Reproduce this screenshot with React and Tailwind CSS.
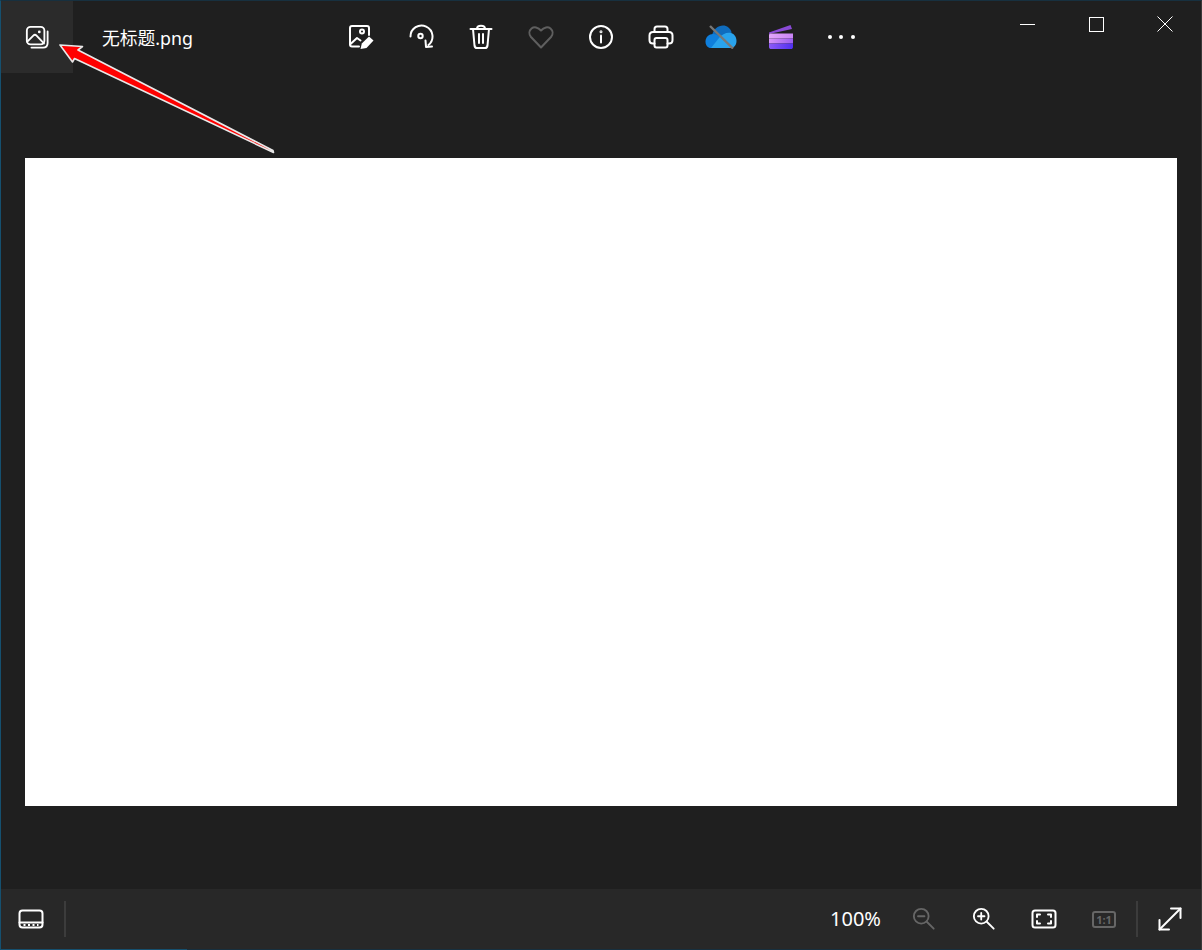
import React from 'react';

const stroke = { fill: 'none', stroke: 'currentColor', strokeWidth: 2, strokeLinecap: 'round', strokeLinejoin: 'round' };

const Icon = ({ children, size = 24, className = '' }) => (
  <svg width={size} height={size} viewBox="0 0 26 26" className={className} {...stroke}>
    {children}
  </svg>
);

const ToolButton = ({ children, dim }) => (
  <button className={`flex h-[72px] w-[60px] items-center justify-center ${dim ? 'text-[#5f5f5f]' : 'text-white'}`}>
    {children}
  </button>
);

const BottomButton = ({ children, dim }) => (
  <button className={`flex h-[60px] w-[60px] items-center justify-center ${dim ? 'text-[#666666]' : 'text-white'}`}>
    {children}
  </button>
);

const CloudOff = () => (
  <svg width="32" height="24" viewBox="0 0 32 24">
    <path d="M7 11 C8 4 13 0.500 18 0.500 C22 0.500 25 3 26.500 7 L26 15 L12 15 Z" fill="#0f6cbd" />
    <path d="M0.500 16.500 C0.500 11.500 4.500 8.500 9 9 C12 9.500 14 11 16 13 L19 19 L8 23 L5 23 C2.500 22.500 0.500 20 0.500 16.500 Z" fill="#0f7fdc" />
    <path d="M14 13 C17 9 22 7 26 8 C29.500 9 31.500 12 31.500 16 C31.500 20 29 23 26 23 L6 23 Z" fill="#29a3ec" />
    <path d="M5 1 L28 23.500" stroke="#777777" strokeWidth="2.400" />
  </svg>
);

const Clipchamp = () => (
  <svg width="26" height="26" viewBox="0 0 26 26">
    <defs>
      <linearGradient id="clip-top" x1="0" y1="0" x2="1" y2="0">
        <stop offset="0" stopColor="#e3a6fa" />
        <stop offset="1" stopColor="#c884f5" />
      </linearGradient>
      <linearGradient id="clip-mid" x1="0" y1="0" x2="1" y2="0">
        <stop offset="0" stopColor="#d795f8" />
        <stop offset="1" stopColor="#9a5cf0" />
      </linearGradient>
      <linearGradient id="clip-low" x1="0" y1="0" x2="1" y2="0">
        <stop offset="0" stopColor="#8d5af5" />
        <stop offset="1" stopColor="#5030f2" />
      </linearGradient>
    </defs>
    <path d="M1 8.500 L22.500 1 L24 5 L1 10 Z" fill="#8a4ad6" />
    <path d="M1 11 C1 10 2 9.500 3 9.500 H25 V14.500 H1 Z" fill="url(#clip-top)" />
    <rect x="1" y="14.500" width="24" height="5" fill="url(#clip-mid)" />
    <path d="M1 19.500 H25 V23 C25 24.500 24 25 23 25 H3 C2 25 1 24.500 1 23 Z" fill="url(#clip-low)" />
  </svg>
);

// red annotation arrow pasted over the screenshot
const Arrow = () => (
  <svg width="290" height="160" viewBox="0 0 290 160" className="absolute -left-px -top-px">
    <path
      d="M60 45 L82.500 46.500 L78 50 L273 150.500 L273.500 152.500 L74.500 58.500 L72.500 62 Z"
      fill="#ff0000"
      stroke="#e8e8e8"
      strokeWidth="1.600"
      strokeLinejoin="round"
    />
  </svg>
);

export default function App() {
  return (
    <div
      className="relative flex h-[950px] w-[1202px] flex-col overflow-hidden border-x border-t border-l-[#15506f] border-r-[#3a3a3a] border-t-[#17303f] bg-[#1f1f1f] text-white"
      style={{ fontFamily: '"Noto Sans", "Noto Sans CJK SC", sans-serif' }}
    >
      <header className="flex h-[72px] shrink-0 items-center">
        <div className="flex h-[72px] w-[72px] items-center justify-center bg-[#2b2b2b]">
          <Icon size={24}>
            <rect x="2" y="2" width="19" height="19" rx="4" />
            <path d="M2.500 18 L9 11.500 C10 10.500 11.500 10.500 12.500 11.500 L20.500 20" />
            <circle cx="15.500" cy="7.500" r="1.500" fill="currentColor" stroke="none" />
            <path d="M24.500 7 V19.500 C24.500 22.500 22.500 24.500 19.500 24.500 H7" />
          </Icon>
        </div>
        <div className="ml-[29px] w-[229px] pt-[3px] text-[17.800px] leading-none">无标题.png</div>

        <div className="flex items-center">
          <ToolButton>
            <Icon size={26}>
              <path d="M11 22.500 H4 C2.800 22.500 2 21.700 2 20.500 V4 C2 2.800 2.800 2 4 2 H19 C20.200 2 21 2.800 21 4 V11" />
              <path d="M2.500 20 L9 14 L12.500 16.500" />
              <circle cx="14" cy="7.500" r="2" />
              <path d="M12.500 25 L13.800 19.500 L21 12.500 L25.500 16.500 L18.500 24 Z" fill="currentColor" stroke="none" />
            </Icon>
          </ToolButton>
          <ToolButton>
            <Icon size={26}>
              <path d="M2.500 12.500 A11 11 0 1 1 20.500 21" />
              <path d="M17.500 16.500 L18 23 L24 22.500" />
              <circle cx="12.500" cy="12" r="2.200" />
            </Icon>
          </ToolButton>
          <ToolButton>
            <Icon size={26}>
              <path d="M2.500 5 H23.500" />
              <path d="M9 5 C9 2.500 10.500 1.800 13 1.800 C15.500 1.800 17 2.500 17 5" />
              <path d="M5 5 L6.500 21.500 C6.700 23 7.500 24 9 24 H17 C18.500 24 19.300 23 19.500 21.500 L21 5" />
              <path d="M11 10 V19 M15 10 V19" />
            </Icon>
          </ToolButton>
          <ToolButton dim>
            <Icon size={26}>
              <path d="M13 23.500 L3 13 C0.500 10 1.200 6.500 3.500 4.500 C6 2.500 10 3 13 6.500 C16 3 20 2.500 22.500 4.500 C24.800 6.500 25.500 10 23 13 Z" />
            </Icon>
          </ToolButton>
          <ToolButton>
            <Icon size={26}>
              <circle cx="13" cy="13" r="11" />
              <path d="M13 11.500 V18.500" />
              <circle cx="13" cy="7.800" r="0.500" fill="currentColor" />
            </Icon>
          </ToolButton>
          <ToolButton>
            <Icon size={26}>
              <path d="M6.500 8 V5 C6.500 3.500 7.500 2.500 9 2.500 H17 C18.500 2.500 19.500 3.500 19.500 5 V8" />
              <path d="M6.500 19.500 H5 C3 19.500 1.500 18 1.500 16 V11.500 C1.500 9.500 3 8 5 8 H21 C23 8 24.500 9.500 24.500 11.500 V16 C24.500 18 23 19.500 21 19.500 H19.500" />
              <rect x="6.500" y="14" width="13" height="9.500" rx="2" />
            </Icon>
          </ToolButton>
          <ToolButton>
            <CloudOff />
          </ToolButton>
          <ToolButton>
            <Clipchamp />
          </ToolButton>
          <ToolButton>
            <div className="flex items-center gap-[7.500px]">
              <span className="size-1 rounded-full bg-white" />
              <span className="size-1 rounded-full bg-white" />
              <span className="size-1 rounded-full bg-white" />
            </div>
          </ToolButton>
        </div>

        <div className="ml-auto flex -translate-y-[13px] items-center pr-[2px]">
          <div className="flex h-[46px] w-[69px] items-center justify-center">
            <span className="h-px w-[15px] bg-white" />
          </div>
          <div className="flex h-[46px] w-[69px] items-center justify-center">
            <span className="size-[15px] border border-white" />
          </div>
          <div className="flex h-[46px] w-[68px] items-center justify-center">
            <svg width="16" height="16" viewBox="0 0 16 16" stroke="white" strokeWidth="1">
              <path d="M0.500 0.500 L15.500 15.500 M15.500 0.500 L0.500 15.500" />
            </svg>
          </div>
        </div>
      </header>

      <main className="flex flex-1 items-start justify-center pt-[85px]">
        <div className="h-[648px] w-[1152px] bg-white" />
      </main>

      <footer className="flex h-[60px] shrink-0 items-center bg-[#282828]">
        <div className="flex h-[60px] w-[60px] items-center justify-center">
          <Icon size={26}>
            <rect x="1.500" y="4.500" width="23" height="17" rx="3" />
            <path d="M1.500 16.500 H24.500" />
            <path d="M5.500 19 H20.500" strokeDasharray="2 2.500" strokeLinecap="butt" />
          </Icon>
        </div>
        <span className="ml-[3px] h-9 w-[2px] bg-[#3c3c3c]" />

        <div className="ml-auto flex items-center">
          <span className="mr-[13px] text-[20px] leading-none">100%</span>
          <BottomButton dim>
            <Icon size={24}>
              <circle cx="10" cy="10" r="8" />
              <path d="M6.500 10 H13.500" />
              <path d="M16 16 L23.500 23.500" />
            </Icon>
          </BottomButton>
          <BottomButton>
            <Icon size={24}>
              <circle cx="10" cy="10" r="8" />
              <path d="M6.500 10 H13.500 M10 6.500 V13.500" />
              <path d="M16 16 L23.500 23.500" />
            </Icon>
          </BottomButton>
          <BottomButton>
            <Icon size={26}>
              <rect x="1.500" y="4.500" width="23" height="17" rx="2.500" />
              <path d="M6 11 V8.500 H9 M17 8.500 H20 V11 M20 15 V17.500 H17 M9 17.500 H6 V15" />
            </Icon>
          </BottomButton>
          <BottomButton dim>
            <div className="flex h-[17px] w-[24px] items-center justify-center rounded-[3px] border-2 border-[#666666] text-[11px] font-bold leading-none">
              1:1
            </div>
          </BottomButton>
          <span className="ml-[2px] mr-px h-9 w-[2px] bg-[#3c3c3c]" />
          <div className="flex h-[60px] w-[62px] items-center justify-center">
            <Icon size={26}>
              <path d="M2.500 23.500 L23.500 2.500" />
              <path d="M14 2.500 H23.500 V12" />
              <path d="M2.500 14 V23.500 H12" />
            </Icon>
          </div>
        </div>
      </footer>

      <div className="flex h-px shrink-0">
        <span className="w-[186px] bg-[#15506f]" />
        <span className="flex-1 bg-[#17303f]" />
      </div>

      <Arrow />
    </div>
  );
}
